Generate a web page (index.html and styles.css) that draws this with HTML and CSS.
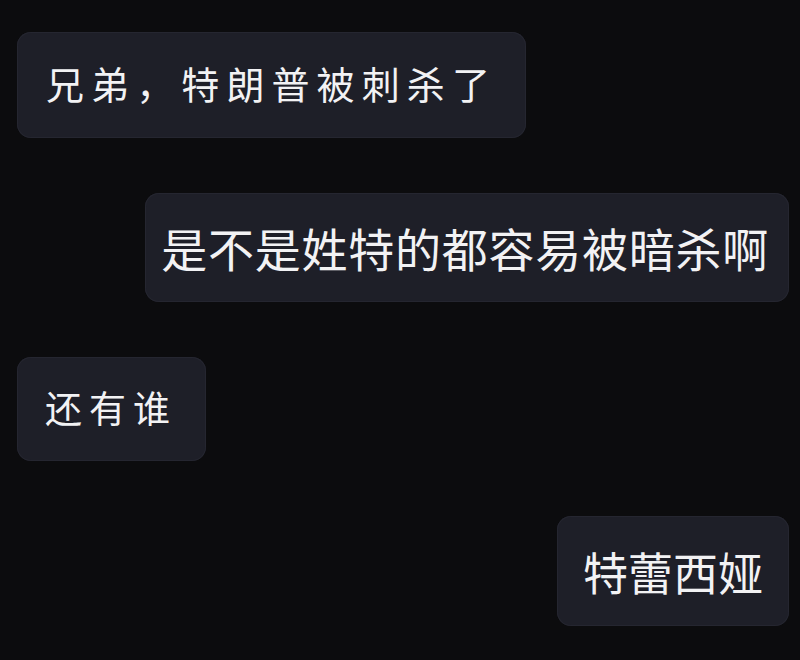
FILE: index.html
```html
<!DOCTYPE html>
<html>
<head>
  <title>聊天记录</title>
  <link rel="stylesheet" href="styles.css">
</head>
<body>
  <div class="chat">
    <div class="msg left">
      <div class="bubble hand first">兄弟，特朗普被刺杀了</div>
    </div>
    <div class="msg right">
      <div class="bubble plain long">是不是姓特的都容易被暗杀啊</div>
    </div>
    <div class="msg left">
      <div class="bubble hand short">还有谁</div>
    </div>
    <div class="msg right">
      <div class="bubble plain name">特蕾西娅</div>
    </div>
  </div>
</body>
</html>
```

FILE: styles.css
```css
body {
  margin: 0;
  padding: 0;
  background: #0c0c0e;
  color: #f2f2f4;
  font-family: "Noto Sans CJK SC", "Noto Sans", sans-serif;
  width: 800px;
  height: 660px;
  overflow: hidden;
}

.chat {
  display: flex;
  flex-direction: column;
  gap: 55px;
  padding: 32px 11px 0 17px;
}

.msg {
  display: flex;
}

.msg.left {
  justify-content: flex-start;
}

.msg.right {
  justify-content: flex-end;
}

.bubble {
  background: #1e1f28;
  border-radius: 14px;
  box-shadow: inset 0 0 0 1px #252630;
  display: flex;
  align-items: center;
  white-space: nowrap;
  box-sizing: border-box;
}

.bubble.hand {
  font-size: 38px;
  letter-spacing: 7.1px;
  height: 106px;
  padding: 0 29px 6px 29px;
}

.bubble.short {
  font-size: 37px;
  letter-spacing: 7px;
  height: 104px;
  padding: 0 29px 4px 28px;
}

.bubble.plain {
  font-size: 46px;
  letter-spacing: 0.75px;
}

.bubble.long {
  height: 109px;
  padding: 0 20px 2px 16px;
}

.bubble.name {
  font-size: 45px;
  letter-spacing: 0;
  height: 110px;
  padding: 0 26px 0 26px;
}
```
